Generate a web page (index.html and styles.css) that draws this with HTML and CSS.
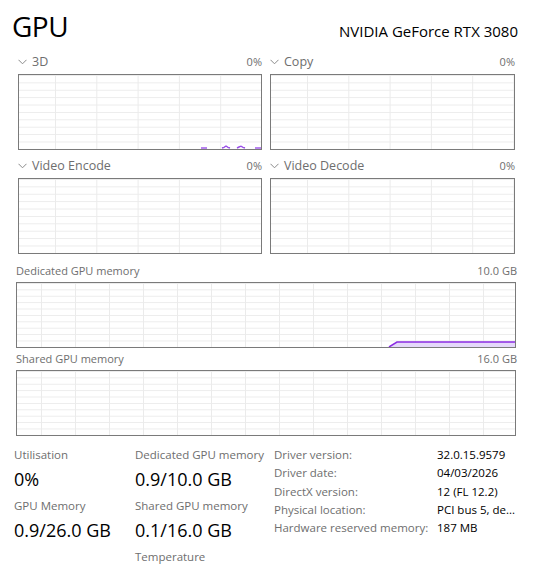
FILE: index.html
```html
<!DOCTYPE html>
<html>
<head>
<meta charset="utf-8">
<link rel="stylesheet" href="styles.css">
</head>
<body>
<div class="page">
  <div class="head">
    <div class="title">GPU</div>
    <div class="model">NVIDIA GeForce RTX 3080</div>
  </div>

  <div class="small-grid">
    <div class="cell">
      <div class="cell-head">
        <span class="name"><svg class="chev" width="9" height="6" viewBox="0 0 9 6"><polyline points="0.5,0.8 4.5,4.8 8.5,0.8" fill="none" stroke="#8a8a8a" stroke-width="1"/></svg>3D</span>
        <span class="pct">0%</span>
      </div>
      <div class="graph small">
        <svg class="plot" width="242" height="74" viewBox="0 0 242 74">
          <polyline points="182,73 188,73" fill="none" stroke="#9a4fe8" stroke-width="1.4"/>
          <polyline points="203,73 205,72.3 207,71 209,72.3 211,73" fill="none" stroke="#9a4fe8" stroke-width="1.4"/>
          <polyline points="218,73 220,72 222,71.2 224,72.3 226,73" fill="none" stroke="#9a4fe8" stroke-width="1.4"/>
          <polyline points="236,73 242,73" fill="none" stroke="#9a4fe8" stroke-width="1.4"/>
        </svg>
      </div>
    </div>
    <div class="cell">
      <div class="cell-head">
        <span class="name"><svg class="chev" width="9" height="6" viewBox="0 0 9 6"><polyline points="0.5,0.8 4.5,4.8 8.5,0.8" fill="none" stroke="#8a8a8a" stroke-width="1"/></svg>Copy</span>
        <span class="pct">0%</span>
      </div>
      <div class="graph small"></div>
    </div>
    <div class="cell">
      <div class="cell-head">
        <span class="name"><svg class="chev" width="9" height="6" viewBox="0 0 9 6"><polyline points="0.5,0.8 4.5,4.8 8.5,0.8" fill="none" stroke="#8a8a8a" stroke-width="1"/></svg>Video Encode</span>
        <span class="pct">0%</span>
      </div>
      <div class="graph small"></div>
    </div>
    <div class="cell">
      <div class="cell-head">
        <span class="name"><svg class="chev" width="9" height="6" viewBox="0 0 9 6"><polyline points="0.5,0.8 4.5,4.8 8.5,0.8" fill="none" stroke="#8a8a8a" stroke-width="1"/></svg>Video Decode</span>
        <span class="pct">0%</span>
      </div>
      <div class="graph small"></div>
    </div>
  </div>

  <div class="mem">
    <div class="mem-head"><span>Dedicated GPU memory</span><span>10.0 GB</span></div>
    <div class="graph big">
      <svg class="plot" width="498" height="64" viewBox="0 0 498 64">
        <polygon points="373,64 380,59 498,59 498,64" fill="#e4d8fa"/>
        <polyline points="372,64 380,59 498,59" fill="none" stroke="#8a2be2" stroke-width="1.5"/>
      </svg>
    </div>
  </div>

  <div class="mem second">
    <div class="mem-head"><span>Shared GPU memory</span><span>16.0 GB</span></div>
    <div class="graph big"></div>
  </div>

  <div class="stats">
    <div class="col c1">
      <div class="lbl">Utilisation</div>
      <div class="val">0%</div>
      <div class="lbl">GPU Memory</div>
      <div class="val">0.9/26.0 GB</div>
    </div>
    <div class="col c2">
      <div class="lbl">Dedicated GPU memory</div>
      <div class="val">0.9/10.0 GB</div>
      <div class="lbl">Shared GPU memory</div>
      <div class="val">0.1/16.0 GB</div>
      <div class="lbl">Temperature</div>
    </div>
    <div class="details">
      <div class="k">Driver version:</div><div class="v">32.0.15.9579</div>
      <div class="k">Driver date:</div><div class="v">04/03/2026</div>
      <div class="k">DirectX version:</div><div class="v">12 (FL 12.2)</div>
      <div class="k">Physical location:</div><div class="v">PCI bus 5, de...</div>
      <div class="k">Hardware reserved memory:</div><div class="v">187 MB</div>
    </div>
  </div>
</div>
</body>
</html>
```

FILE: styles.css
```css
* { box-sizing: border-box; }
html, body { margin: 0; padding: 0; background: #fff; }
body {
  font-family: "Open Sans", "Noto Sans", "DejaVu Sans", sans-serif;
  color: #000;
  width: 537px;
  height: 566px;
  overflow: hidden;
}
.page {
  padding: 0 21px 0 16px;
}
.head {
  display: flex;
  justify-content: space-between;
  align-items: baseline;
  height: 52px;
}
.title {
  font-size: 28px;
  line-height: 52px;
  margin-left: -4px;
  letter-spacing: -0.5px;
}
.model {
  font-size: 15px;
  margin-right: -2px;
}
.small-grid {
  display: grid;
  grid-template-columns: 244px 245px;
  column-gap: 8px;
  row-gap: 6px;
  margin-left: 2px;
}
.cell-head {
  display: flex;
  justify-content: space-between;
  align-items: center;
  height: 18px;
  margin-bottom: 4px;
  font-size: 12.5px;
  color: #6e6e6e;
}
.name { display: flex; align-items: center; }
.chev { margin-right: 5px; margin-top: 1px; }
.pct { font-size: 11px; color: #6e6e6e; }
.graph {
  border: 1px solid #7a7a7a;
  background-color: #fff;
  background-image:
    linear-gradient(to right, #ebebeb 1px, transparent 1px),
    linear-gradient(to bottom, #ebebeb 1px, transparent 1px);
}
.graph.small {
  height: 76px;
  background-size: 41.3px 100%, 100% 7.4px;
  background-position: 36px 0, 0 0;
}
.graph.big {
  height: 66px;
  background-size: 34px 100%, 100% 6.4px;
  background-position: 24px 0, 0 0;
}
.plot { display: block; }
.mem { margin-top: 8px; width: 500px; }
.mem.second { margin-top: 2px; }
.mem-head {
  display: flex;
  justify-content: space-between;
  height: 18px;
  line-height: 18px;
  margin-bottom: 2px;
  font-size: 11px;
  color: #6e6e6e;
}
.mem-head span:last-child { margin-right: -1px; }
.stats {
  display: flex;
  margin-top: 10px;
  margin-left: -2px;
}
.col { display: flex; flex-direction: column; }
.c1 { width: 121px; }
.c2 { width: 139px; }
.lbl {
  font-size: 11.5px;
  color: #6e6e6e;
  line-height: 18px;
  height: 18px;
  margin-bottom: 3px;
}
.val {
  font-size: 18px;
  line-height: 24px;
  height: 24px;
  margin-bottom: 6px;
}
.details {
  display: grid;
  grid-template-columns: 163px auto;
  grid-auto-rows: 18.3px;
  margin-top: 0;
  font-size: 11.5px;
  line-height: 18.3px;
}
.k { color: #6e6e6e; white-space: nowrap; }
.v { color: #000; white-space: nowrap; }
```
